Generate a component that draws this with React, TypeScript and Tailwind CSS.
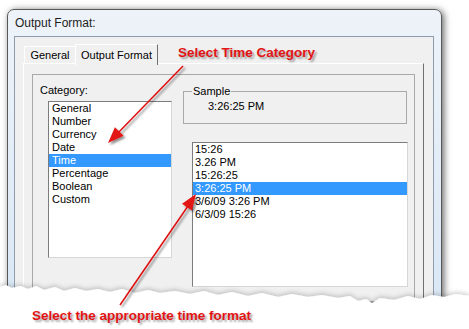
import React from "react";

const categories = ["General", "Number", "Currency", "Date", "Time", "Percentage", "Boolean", "Custom"];
const formats = ["15:26", "3.26 PM", "15:26:25", "3:26:25 PM", "3/6/09 3:26 PM", "6/3/09 15:26"];

function ListBox({
  items,
  selected,
  className,
  textPad,
}: {
  items: string[];
  selected: string;
  className: string;
  textPad: string;
}) {
  return (
    <div
      className={`bg-white border border-t-[#7c7c7c] border-l-[#7c7c7c] border-r-[#d6d6d6] border-b-[#d6d6d6] ${className}`}
    >
      {items.map((item) => (
        <div
          key={item}
          className={`h-[13px] leading-[13px] whitespace-nowrap ${textPad} ${
            item === selected ? "bg-[#3399ff] text-white" : ""
          }`}
        >
          {item}
        </div>
      ))}
    </div>
  );
}

export default function App() {
  return (
    <div className="relative w-[469px] h-[329px] overflow-hidden bg-white font-['Liberation_Sans',Arial,sans-serif] text-[11px] leading-[13px] text-black">
      {/* dialog window */}
      <div className="ml-[7px] mt-[9px] w-[435px] h-[296px] flex flex-col rounded-t-[7px] border border-[#585858] bg-gradient-to-b from-[#eef3f9] to-[#d9e7f5] pl-[6px] pr-[7px] shadow-[2px_1px_7px_rgba(0,0,0,0.6)]">
        <div className="h-[26px] flex items-center pl-[1px] text-[12px] text-[#1e1e1e]">Output Format:</div>
        <div className="flex-1 flex flex-col border border-[#8f9cab] bg-[#f0f0f0]">
          {/* tabs */}
          <div className="mt-[7px] ml-[9px] h-[19px] flex items-end">
            <div className="h-[17px] w-[51px] flex items-center justify-center border-l border-t border-white">
              General
            </div>
            <div className="relative z-10 -mb-[2px] h-[21px] w-[83px] flex items-center justify-center bg-[#f0f0f0] border-l border-t border-r border-l-white border-t-white border-r-[#6f6f6f]">
              Output Format
            </div>
          </div>
          {/* tab panel */}
          <div className="ml-[8px] w-[401px] flex-1 flex flex-col border border-l-white border-t-white border-r-[#6f6f6f] border-b-[#6f6f6f] bg-[#f0f0f0]">
            <div className="mt-[10px] ml-[8px] w-[383px] flex-1 flex border border-[#a9a9a9]">
              {/* left column */}
              <div className="w-[150px] pl-[7px] pt-[9px] flex flex-col">
                <div className="h-[13px]">Category:</div>
                <ListBox
                  items={categories}
                  selected="Time"
                  className="mt-[4px] ml-[8px] w-[124px] h-[157px]"
                  textPad="pl-[3px]"
                />
              </div>
              {/* right column */}
              <div className="flex flex-col pt-[10px]">
                <fieldset className="w-[224px] h-[39px] border border-[#a9a9a9]">
                  <legend className="ml-[8px] px-[1px] leading-[13px]">Sample</legend>
                  <div className="mt-[2px] pl-[24px]">3:26:25 PM</div>
                </fieldset>
                <ListBox
                  items={formats}
                  selected="3:26:25 PM"
                  className="mt-[18px] ml-[9px] w-[216px] h-[145px]"
                  textPad="pl-[2px]"
                />
              </div>
            </div>
          </div>
        </div>
      </div>

      {/* torn edge + arrows */}
      <svg className="absolute left-0 top-0 pointer-events-none" width="469" height="329" viewBox="0 0 469 329">
        <defs>
          <filter id="ds" x="-20%" y="-20%" width="140%" height="140%">
            <feDropShadow dx="2" dy="2" stdDeviation="1.2" floodColor="#000" floodOpacity="0.45" />
          </filter>
          <filter id="tear" x="-5%" y="-20%" width="110%" height="140%">
            <feDropShadow dx="0" dy="-2" stdDeviation="2" floodColor="#000" floodOpacity="0.18" />
          </filter>
        </defs>
        <path
          filter="url(#tear)"
          fill="#ffffff"
          d="M0,329 L0,287 L6,285 L12,288 L20,286 L28,289 L36,286 L44,290 L55,287 L64,291 L75,288 L86,291 L98,289 L110,292 L122,289 L135,293 L148,290 L160,293 L175,291 L190,294 L204,291 L218,295 L232,292 L248,296 L262,293 L278,297 L292,294 L308,297 L322,295 L338,298 L350,296 L358,301 L366,299 L372,303 L380,298 L394,300 L408,296 L420,299 L432,295 L444,297 L456,294 L469,296 L469,329 Z"
        />
        <g filter="url(#ds)" stroke="#dd1111" fill="#e31414">
          <line x1="183" y1="66" x2="117" y2="134" strokeWidth="1.5" />
          <polygon points="108,143 123.5,135.7 114.9,127.3" stroke="none" />
          <line x1="120" y1="305" x2="188" y2="206" strokeWidth="1.5" />
          <polygon points="196,194 191.9,210.6 182,203.8" stroke="none" />
        </g>
      </svg>

      <div className="absolute left-[178px] top-[45px] text-[13.5px] leading-[16px] font-bold text-[#e31414] [text-shadow:2px_2px_2px_rgba(0,0,0,0.35)]">
        Select Time Category
      </div>
      <div className="absolute left-[32px] top-[308px] text-[13.5px] leading-[16px] font-bold text-[#e31414] [text-shadow:2px_2px_2px_rgba(0,0,0,0.35)]">
        Select the appropriate time format
      </div>
    </div>
  );
}
